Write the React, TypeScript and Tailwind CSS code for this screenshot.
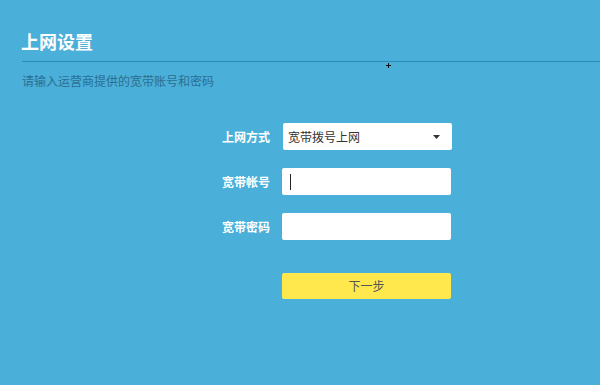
export default function App() {
  return (
    <div className="relative w-[600px] h-[385px] overflow-hidden bg-[#4aafd9] font-['Microsoft_YaHei','Noto_Sans_CJK_SC',sans-serif]">
      <div className="pl-[21px] pt-[29px]">
        <h1 className="text-[18px] font-bold leading-[24px] text-white">上网设置</h1>
      </div>
      <div className="ml-[22px] mt-[8px] h-px bg-[#2a8ab8]" />
      <p className="ml-[22px] mt-[11px] text-[12px] leading-[16px] text-[#2b6e92]">
        请输入运营商提供的宽带账号和密码
      </p>

      <div className="mt-[34px] flex flex-col gap-[18px]">
        <div className="flex items-center">
          <label className="w-[270px] text-right text-[12px] font-bold text-white">上网方式</label>
          <div className="ml-[13px] flex h-[27px] w-[169px] items-center justify-between rounded-[2px] bg-white pl-[5px] pr-[12px]">
            <span className="text-[12px] text-[#333]">宽带拨号上网</span>
            <svg width="7" height="4" viewBox="0 0 7 4">
              <path d="M0 0h7L3.5 4z" fill="#333" />
            </svg>
          </div>
        </div>
        <div className="flex items-center">
          <label className="w-[270px] text-right text-[12px] font-bold text-white">宽带帐号</label>
          <div className="ml-[12px] flex h-[27px] w-[169px] items-center rounded-[2px] bg-white pl-[8px]">
            <div className="h-[16px] w-px bg-[#222]" />
          </div>
        </div>
        <div className="flex items-center">
          <label className="w-[270px] text-right text-[12px] font-bold text-white">宽带密码</label>
          <div className="ml-[12px] h-[27px] w-[169px] rounded-[2px] bg-white" />
        </div>
      </div>

      <div className="mt-[33px] flex">
        <button className="ml-[282px] h-[26px] w-[169px] rounded-[2px] bg-[#ffe84e] text-[12px] text-[#555]">
          下一步
        </button>
      </div>

      <svg className="absolute left-[386px] top-[63px]" width="5" height="5" viewBox="0 0 5 5">
        <path d="M2 0h1v5H2zM0 2h5v1H0z" fill="#111" />
      </svg>
    </div>
  );
}
